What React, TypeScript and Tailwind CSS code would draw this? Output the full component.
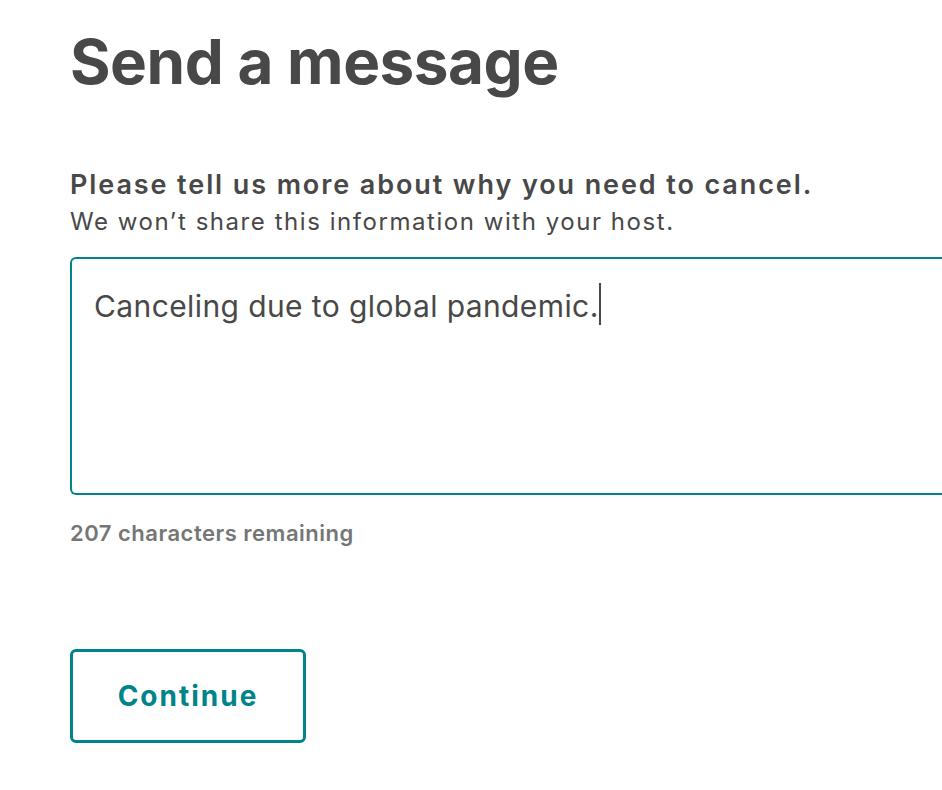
export default function App() {
  const message = "Canceling due to global pandemic.";
  const remaining = 240 - message.length;

  return (
    <div className="min-h-screen bg-white text-[#484848] font-['Inter','Liberation_Sans',sans-serif]">
      <div className="pl-[70px] pt-[22px]">
        <h1 className="text-[62px] leading-[80px] font-bold tracking-[-0.5px]">Send a message</h1>

        <p className="mt-[67px] text-[27px] leading-[32px] font-semibold tracking-[1.9px]">
          Please tell us more about why you need to cancel.
        </p>
        <p className="mt-[6px] text-[24px] leading-[30px] font-normal tracking-[1.55px]">
          We won’t share this information with your host.
        </p>

        <div className="mt-[20px] h-[238px] rounded-l-[6px] border-2 border-r-0 border-[#008489] pl-[22px] pt-[24px]">
          <p className="text-[30px] leading-[40px] font-normal tracking-[0.4px]">
            {message}
            <span className="inline-block w-[2px] h-[42px] align-[-8px] bg-[#484848]" />
          </p>
        </div>

        <p className="mt-[24px] text-[22px] leading-[28px] font-semibold tracking-[0.5px] text-[#767676]">
          {remaining} characters remaining
        </p>

        <button className="mt-[102px] w-[236px] h-[94px] rounded-[6px] border-[3px] border-[#008489] text-[28px] font-bold tracking-[2px] text-[#008489]">
          Continue
        </button>
      </div>
    </div>
  );
}
